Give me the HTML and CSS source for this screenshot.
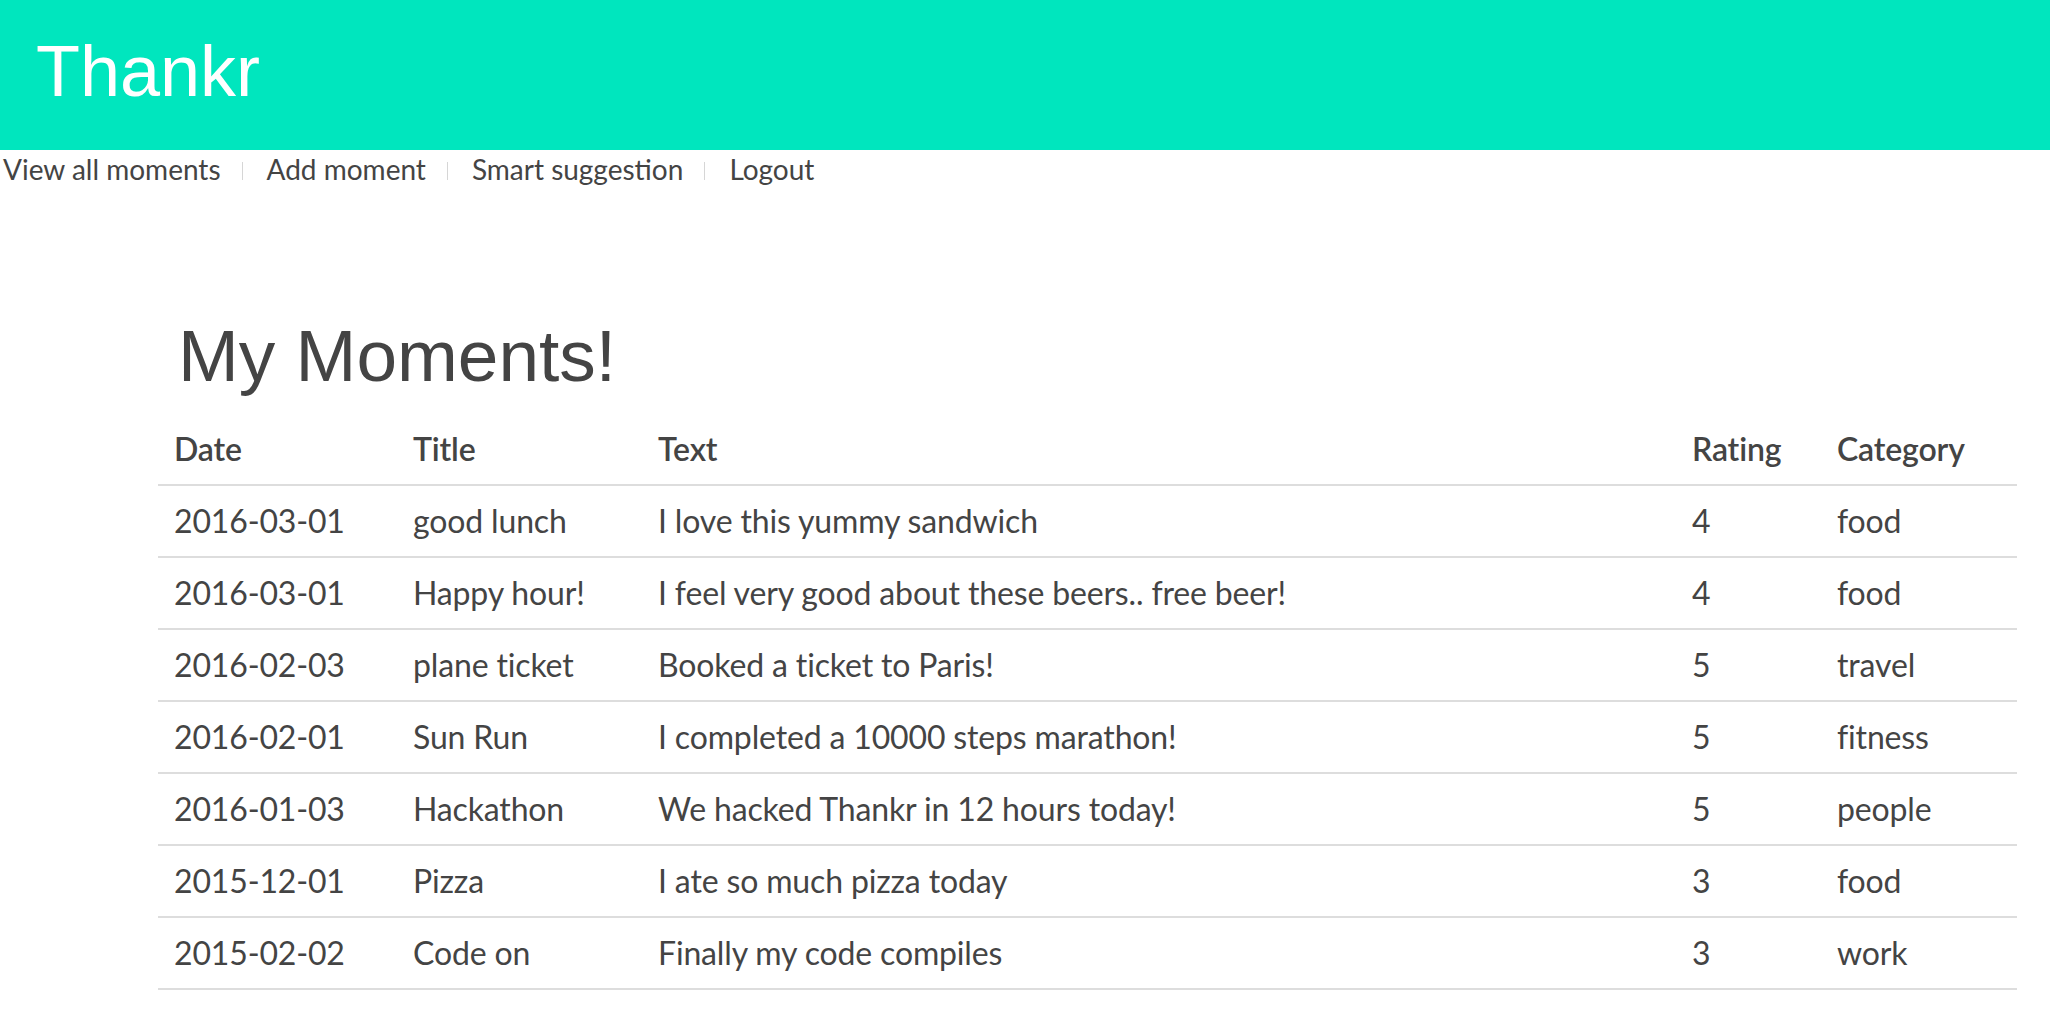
FILE: index.html
```html
<!DOCTYPE html>
<html lang="en">
<head>
<meta charset="utf-8">
<title>Thankr</title>
<link rel="stylesheet" href="styles.css">
</head>
<body>
<header class="site-header">
  <div class="brand">Thankr</div>
</header>
<nav class="site-nav">
  <a class="nav-link" href="#">View all moments</a>
  <span class="nav-sep"></span>
  <a class="nav-link" href="#">Add moment</a>
  <span class="nav-sep"></span>
  <a class="nav-link" href="#">Smart suggestion</a>
  <span class="nav-sep"></span>
  <a class="nav-link" href="#">Logout</a>
</nav>
<main class="content">
  <h1 class="page-title">My Moments!</h1>
  <table class="moments">
    <colgroup>
      <col class="c-date"><col class="c-title"><col class="c-text"><col class="c-rating"><col class="c-cat">
    </colgroup>
    <thead>
      <tr><th>Date</th><th>Title</th><th>Text</th><th>Rating</th><th>Category</th></tr>
    </thead>
    <tbody>
      <tr><td>2016-03-01</td><td>good lunch</td><td>I love this yummy sandwich</td><td>4</td><td>food</td></tr>
      <tr><td>2016-03-01</td><td>Happy hour!</td><td>I feel very good about these beers.. free beer!</td><td>4</td><td>food</td></tr>
      <tr><td>2016-02-03</td><td>plane ticket</td><td>Booked a ticket to Paris!</td><td>5</td><td>travel</td></tr>
      <tr><td>2016-02-01</td><td>Sun Run</td><td>I completed a 10000 steps marathon!</td><td>5</td><td>fitness</td></tr>
      <tr><td>2016-01-03</td><td>Hackathon</td><td>We hacked Thankr in 12 hours today!</td><td>5</td><td>people</td></tr>
      <tr><td>2015-12-01</td><td>Pizza</td><td>I ate so much pizza today</td><td>3</td><td>food</td></tr>
      <tr><td>2015-02-02</td><td>Code on</td><td>Finally my code compiles</td><td>3</td><td>work</td></tr>
    </tbody>
  </table>
</main>
</body>
</html>
```

FILE: styles.css
```css
html, body {
  margin: 0;
  padding: 0;
  background: #fff;
}

body {
  font-family: Lato, "Open Sans", sans-serif;
  color: #444;
}

.site-header {
  box-sizing: border-box;
  height: 150px;
  background: #00e6be;
  padding: 30px 0 0 36px;
}

.brand {
  font-family: "Liberation Sans", Arial, sans-serif;
  font-size: 72px;
  line-height: normal;
  color: #fff;
}

.site-nav {
  display: flex;
  align-items: center;
  margin-top: 2px;
  padding-left: 3px;
  font-size: 28px;
  line-height: 34px;
}

.nav-link {
  color: #444;
  text-decoration: none;
}

.nav-sep {
  display: inline-block;
  width: 1px;
  height: 18px;
  margin: 4px 24px 0 21px;
  background: #d6d6d6;
}

.content {
  padding: 0 33px 0 158px;
}

.page-title {
  font-family: "Liberation Sans", Arial, sans-serif;
  font-weight: normal;
  font-size: 73px;
  line-height: 79px;
  margin: 130px 0 19px 0;
  padding-left: 20px;
  color: #444;
}

.moments {
  width: 100%;
  table-layout: fixed;
  border-collapse: collapse;
  font-size: 32px;
  line-height: 46px;
  letter-spacing: -0.15px;
}

.c-date { width: 239px; }
.c-title { width: 245px; }
.c-text { width: 1034px; }
.c-rating { width: 145px; }
.c-cat { width: 196px; }

.moments th,
.moments td {
  text-align: left;
  padding: 12px 16px;
  white-space: nowrap;
}

.moments th {
  font-weight: 600;
  border-bottom: 2px solid #ddd;
}

.moments td {
  border-bottom: 2px solid #ddd;
}
```
